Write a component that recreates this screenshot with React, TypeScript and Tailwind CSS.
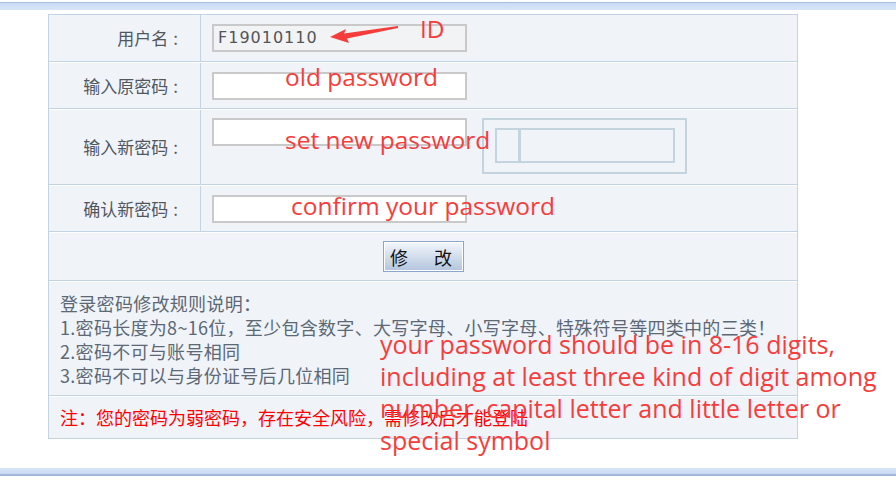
import React from "react";

const cjk = "font-['Noto_Sans_CJK_SC','Noto_Sans',sans-serif]";
const anno =
  "absolute whitespace-nowrap text-[#f73c3c] leading-[32px] font-['Open_Sans','Noto_Sans_CJK_SC',sans-serif]";

function Label({ children }: { children: React.ReactNode }) {
  return (
    <div className="w-[152px] shrink-0 h-full border-r border-[#c3d3e1] flex items-center justify-end pr-[22px] text-[17px] text-[#52575e]">
      <span>{children}</span>
      <span className="ml-[5px]">:</span>
    </div>
  );
}

export default function App() {
  return (
    <div className={`relative w-[896px] h-[488px] bg-white overflow-hidden ${cjk}`}>
      {/* top bar */}
      <div className="mt-[2px] h-[8px] border-t border-[#a8bfdf] bg-gradient-to-b from-[#c9dbf3] to-[#d8e5f7]" />

      {/* form table */}
      <div className="ml-[48px] mt-[4px] w-[750px] border border-[#c3d3e1] bg-[#f0f4f9]">
        {/* row 1 */}
        <div className="flex h-[47px] border-b border-[#c3d3e1]">
          <Label>用户名</Label>
          <div className="flex items-center pl-[11px]">
            <div className="w-[255px] h-[28px] border-2 border-[#c9c9c9] bg-[#f1f3f5] flex items-center pl-[4px] text-[16px] tracking-[1px] text-[#555] font-['DejaVu_Sans',sans-serif]">
              F19010110
            </div>
          </div>
        </div>
        {/* row 2 */}
        <div className="flex h-[47px] border-b border-t border-b-[#c3d3e1] border-t-white">
          <Label>输入原密码</Label>
          <div className="flex items-center pl-[11px]">
            <div className="w-[255px] h-[28px] border-2 border-[#c9c9c9] bg-white" />
          </div>
        </div>
        {/* row 3 */}
        <div className="flex h-[76px] border-b border-t border-b-[#c3d3e1] border-t-white">
          <Label>输入新密码</Label>
          <div className="flex items-start pl-[11px] pt-[8px]">
            <div className="w-[255px] h-[28px] border-2 border-[#c9c9c9] bg-white" />
            <div className="ml-[15px] w-[205px] h-[56px] border-2 border-[#c4d4df] pl-[11px] pt-[8px]">
              <div className="w-[180px] h-[35px] border-2 border-[#c4d4df] flex">
                <div className="w-[24px] h-full border-r-[3px] border-[#c4d4df]" />
              </div>
            </div>
          </div>
        </div>
        {/* row 4 */}
        <div className="flex h-[47px] border-b border-t border-b-[#c3d3e1] border-t-white">
          <Label>确认新密码</Label>
          <div className="flex items-center pl-[11px]">
            <div className="w-[255px] h-[28px] border-2 border-[#c9c9c9] bg-white" />
          </div>
        </div>
        {/* row 5 button */}
        <div className="flex h-[49px] items-center justify-center border-b border-t border-b-[#c3d3e1] border-t-white">
          <button className="w-[81px] h-[31px] border border-[#8ca6c9] shadow-[inset_0_0_0_1px_#ffffff] bg-gradient-to-b from-[#f4f7fc] to-[#b2c4dd] text-[18px] leading-none tracking-[4px] text-[#111]">
            修　改
          </button>
        </div>
        {/* row 6 rules */}
        <div className="h-[115px] border-b border-t border-b-[#c3d3e1] border-t-white pl-[11px] pt-[9px] text-[18px] leading-[24px] tracking-[0.3px] text-[#5c6875]">
          <div>登录密码修改规则说明：</div>
          <div>1.密码长度为8~16位，至少包含数字、大写字母、小写字母、特殊符号等四类中的三类！</div>
          <div>2.密码不可与账号相同</div>
          <div>3.密码不可以与身份证号后几位相同</div>
        </div>
        {/* row 7 note */}
        <div className="h-[42px] border-t border-white flex items-center pl-[11px] text-[18px] text-[#ff0000]">
          注：您的密码为弱密码，存在安全风险，需修改后才能登陆
        </div>
      </div>

      {/* bottom bar */}
      <div className="mt-[29px] h-[8px] border-b-2 border-[#a3b8d8] bg-gradient-to-b from-[#dbe7f8] to-[#c6d8f1]" />

      {/* annotations */}
      <svg className="absolute left-0 top-0" width="896" height="488" viewBox="0 0 896 488">
        <polygon
          points="330,37 346,29 344,33.5 398,26 398,28 347,38.5 349,43"
          fill="#f73c3c"
        />
      </svg>
      <div className={`${anno} text-[24.5px] left-[420px] top-[13px]`}>ID</div>
      <div className={`${anno} text-[24.5px] left-[285px] top-[61px]`}>old password</div>
      <div className={`${anno} text-[24.5px] left-[285px] top-[124px]`}>set new password</div>
      <div className={`${anno} text-[24.5px] left-[291px] top-[190px]`}>confirm your password</div>
      <div className={`${anno} text-[25px] left-[380px] top-[328px]`}>
        your password should be in 8-16 digits,
        <br />
        including at least three kind of digit among
        <br />
        number, capital letter and little letter or
        <br />
        special symbol
      </div>
    </div>
  );
}
